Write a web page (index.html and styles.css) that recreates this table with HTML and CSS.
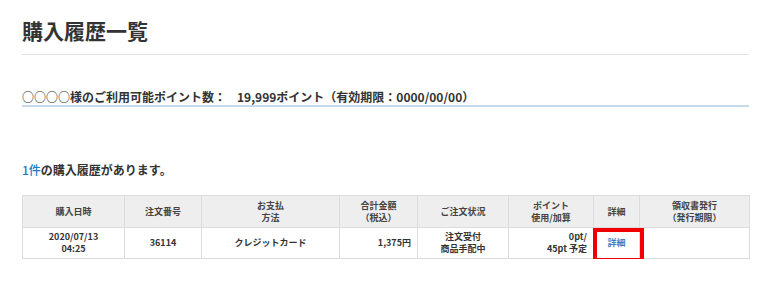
FILE: index.html
```html
<!DOCTYPE html>
<html lang="ja">
<head>
<meta charset="utf-8">
<title>購入履歴一覧</title>
<link rel="stylesheet" href="styles.css">
</head>
<body>
<main class="page">
  <h1 class="title">購入履歴一覧</h1>
  <p class="points"><span class="points-label">○○○○様のご利用可能ポイント数：</span><span class="points-value">19,999ポイント（有効期限：0000/00/00）</span></p>
  <p class="count"><span class="count-num">1件</span>の購入履歴があります。</p>
  <table class="history">
    <colgroup>
      <col class="c1"><col class="c2"><col class="c3"><col class="c4"><col class="c5"><col class="c6"><col class="c7"><col class="c8">
    </colgroup>
    <thead>
      <tr>
        <th>購入日時</th>
        <th>注文番号</th>
        <th>お支払<br>方法</th>
        <th>合計金額<br>（税込）</th>
        <th>ご注文状況</th>
        <th>ポイント<br>使用/加算</th>
        <th>詳細</th>
        <th>領収書発行<br>（発行期限）</th>
      </tr>
    </thead>
    <tbody>
      <tr>
        <td>2020/07/13<br>04:25</td>
        <td>36114</td>
        <td>クレジットカード</td>
        <td class="num">1,375円</td>
        <td>注文受付<br>商品手配中</td>
        <td class="num">0pt/<br>45pt 予定</td>
        <td class="detail"><a href="#" class="detail-link">詳細</a><span class="highlight"></span></td>
        <td></td>
      </tr>
    </tbody>
  </table>
</main>
</body>
</html>
```

FILE: styles.css
```css
html, body {
  margin: 0;
  padding: 0;
  background: #ffffff;
}

body {
  font-family: "Noto Sans CJK JP", "Noto Sans", sans-serif;
  color: #333333;
}

.page {
  width: 727px;
  padding-left: 22px;
}

.title {
  margin: 0;
  padding: 15px 0 9px;
  font-size: 21px;
  line-height: 30px;
  font-weight: 700;
  letter-spacing: 0;
  color: #333333;
  border-bottom: 1px solid #e2e2e2;
}

.points {
  margin: 34px 0 0;
  font-size: 12px;
  line-height: 16px;
  font-weight: 700;
  border-bottom: 2px solid #c4dbee;
  padding-bottom: 0;
}

.points-label {
  margin-right: 11px;
}

.count {
  margin: 54px 0 0;
  font-size: 12px;
  line-height: 18px;
  font-weight: 700;
  letter-spacing: 0;
}

.count-num {
  color: #1a78c8;
  font-weight: 500;
}

.history {
  margin-top: 16px;
  width: 727px;
  border-collapse: collapse;
  table-layout: fixed;
  font-size: 9px;
  font-weight: 700;
  line-height: 12px;
}

.c1 { width: 102px; }
.c2 { width: 77px; }
.c3 { width: 138px; }
.c4 { width: 78px; }
.c5 { width: 91px; }
.c6 { width: 85px; }
.c7 { width: 46px; }
.c8 { width: 110px; }

.history th,
.history td {
  border: 1px solid #dcdcdc;
  text-align: center;
  vertical-align: middle;
  padding: 0 6px;
}

.history th {
  background: #eeeeee;
  height: 31px;
  color: #444444;
}

.history td {
  height: 30px;
  background: #ffffff;
}

.history td.num {
  text-align: right;
  padding-right: 6px;
}

.detail {
  position: relative;
}

.detail-link {
  color: #3a7fc6;
  text-decoration: none;
}

.highlight {
  position: absolute;
  left: -1px;
  top: 0;
  width: 51px;
  height: 34px;
  box-sizing: border-box;
  border: 4px solid #f00000;
  pointer-events: none;
}
```
